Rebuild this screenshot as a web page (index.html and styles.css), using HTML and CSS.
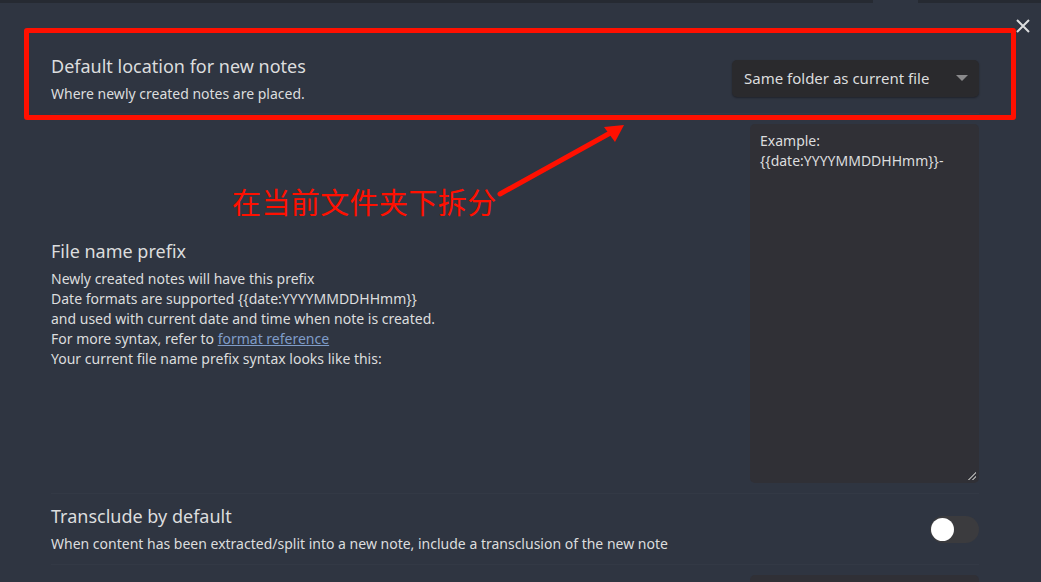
FILE: index.html
```html
<!DOCTYPE html>
<html>
<head>
<meta charset="utf-8">
<link rel="stylesheet" href="styles.css">
</head>
<body>
<div class="topbar"><div class="tab"></div></div>
<div class="pane">
  <div class="setting first">
    <div class="info">
      <div class="name">Default location for new notes</div>
      <div class="desc">Where newly created notes are placed.</div>
    </div>
    <div class="control">
      <div class="dropdown">
        <span>Same folder as current file</span>
        <span class="caret"></span>
      </div>
    </div>
  </div>
  <div class="setting">
    <div class="info">
      <div class="name">File name prefix</div>
      <div class="desc lines">Newly created notes will have this prefix<br>Date formats are supported {{date:YYYYMMDDHHmm}}<br>and used with current date and time when note is created.<br>For more syntax, refer to <a class="link" href="#">format reference</a><br>Your current file name prefix syntax looks like this:</div>
    </div>
    <div class="control">
      <div class="textarea tall">Example:<br>{{date:YYYYMMDDHHmm}}-<span class="grip"></span></div>
    </div>
  </div>
  <div class="setting">
    <div class="info">
      <div class="name">Transclude by default</div>
      <div class="desc">When content has been extracted/split into a new note, include a transclusion of the new note</div>
    </div>
    <div class="control">
      <div class="toggle"><span class="knob"></span></div>
    </div>
  </div>
  <div class="setting">
    <div class="info"></div>
    <div class="control">
      <div class="textarea short"></div>
    </div>
  </div>
</div>

<svg class="close" width="16" height="16" viewBox="0 0 16 16"><path d="M2 2 L14 14 M14 2 L2 14" stroke="#dcddde" stroke-width="2" fill="none"/></svg>

<div class="redbox"></div>
<div class="note">在当前文件夹下拆分</div>
<svg class="arrow" width="140" height="90" viewBox="490 115 140 90">
  <line x1="500" y1="194" x2="612" y2="132" stroke="#ff1000" stroke-width="5" stroke-linecap="round"/>
  <polygon points="624,125 604,127 615,142" fill="#ff1000"/>
</svg>
</body>
</html>
```

FILE: styles.css
```css
html, body {
  margin: 0;
  padding: 0;
  background: #2f3541;
  height: 100%;
  overflow: hidden;
  font-family: "Noto Sans", "Open Sans", sans-serif;
  color: #dcddde;
}
.topbar {
  height: 3px;
  background: #262a32;
  position: relative;
}
.tab {
  position: absolute;
  left: 873px;
  width: 45px;
  top: 0;
  height: 3px;
  background: #2f3541;
}
.pane {
  padding: 41px 62px 0 51px;
}
.setting {
  display: flex;
  align-items: center;
  justify-content: space-between;
  border-top: 1px solid #333945;
  padding: 10px 0;
}
.setting.first {
  border-top: none;
  height: 49px;
}
.info {
  flex: 1;
}
.name {
  font-size: 18px;
  line-height: 24px;
  margin-bottom: 6px;
}
.desc {
  font-size: 14px;
  line-height: 20px;
}
.link {
  color: #7f9cc8;
  text-decoration: underline;
}
.dropdown {
  width: 247px;
  height: 37px;
  box-sizing: border-box;
  background: #2a2a2d;
  border-radius: 5px;
  box-shadow: 0 1px 2px rgba(0,0,0,0.35);
  display: flex;
  align-items: center;
  justify-content: space-between;
  padding: 0 11px 2px 12px;
  font-size: 15px;
}
.caret {
  width: 0;
  height: 0;
  border-left: 6px solid transparent;
  border-right: 6px solid transparent;
  border-top: 6px solid #8a8a8c;
}
.textarea {
  width: 229px;
  box-sizing: border-box;
  background: #303036;
  border-radius: 5px;
  padding: 7px 10px;
  font-size: 14px;
  line-height: 20px;
  position: relative;
}
.textarea.tall {
  height: 359px;
}
.textarea.short {
  height: 40px;
}
.grip {
  position: absolute;
  right: 3px;
  bottom: 3px;
  width: 8px;
  height: 8px;
  background: linear-gradient(135deg, transparent 45%, #9a9a9a 45%, #9a9a9a 58%, transparent 58%, transparent 72%, #9a9a9a 72%, #9a9a9a 85%, transparent 85%);
}
.toggle {
  width: 49px;
  height: 27px;
  border-radius: 14px;
  background: #3b3b3e;
  position: relative;
}
.knob {
  position: absolute;
  left: 1px;
  top: 2px;
  width: 23px;
  height: 23px;
  border-radius: 50%;
  background: #ffffff;
}
.close {
  position: absolute;
  left: 1015px;
  top: 18px;
}
.redbox {
  position: absolute;
  left: 24px;
  top: 28px;
  width: 982px;
  height: 82px;
  border: 5px solid #ff1000;
  border-radius: 3px;
}
.note {
  position: absolute;
  left: 232px;
  top: 183px;
  font-family: "Noto Sans CJK SC", sans-serif;
  font-size: 29px;
  line-height: 36px;
  color: #ff1000;
  letter-spacing: 0.4px;
}
.arrow {
  position: absolute;
  left: 490px;
  top: 115px;
}
```
